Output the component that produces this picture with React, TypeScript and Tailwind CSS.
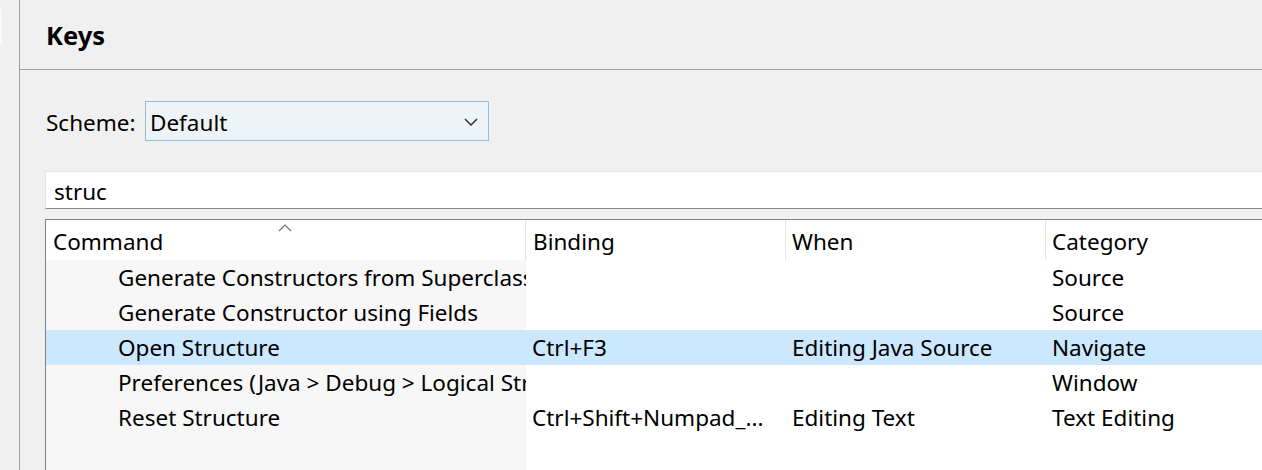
import React from "react";

const font = { fontFamily: '"Noto Sans", "Open Sans", sans-serif' };

const rows = [
  { cmd: "Generate Constructors from Superclass", bind: "", when: "", cat: "Source" },
  { cmd: "Generate Constructor using Fields", bind: "", when: "", cat: "Source" },
  { cmd: "Open Structure", bind: "Ctrl+F3", when: "Editing Java Source", cat: "Navigate", sel: true },
  { cmd: "Preferences (Java > Debug > Logical Structures)", bind: "", when: "", cat: "Window" },
  { cmd: "Reset Structure", bind: "Ctrl+Shift+Numpad_...", when: "Editing Text", cat: "Text Editing" },
];

export default function App() {
  return (
    <div
      className="w-[1262px] h-[470px] bg-[#f0f0f0] flex overflow-hidden text-black text-[22.5px]"
      style={font}
    >
      <div className="w-[19px] shrink-0 flex flex-col">
        <div className="mt-[9px] h-[36px] w-[2px] bg-[#f9f9f9]" />
      </div>
      <div className="flex-1 min-w-0 flex flex-col border-l border-[#a0a0a0] overflow-hidden">
        <div className="h-[70px] shrink-0 border-b border-[#a0a0a0] flex items-start pl-[26px] pt-[23px]">
          <div className="font-bold text-[25.5px] leading-none">Keys</div>
        </div>
        <div className="flex-1 flex flex-col pl-[25px] pt-[31px] min-w-0">
          <div className="flex items-center h-[40px]">
            <div className="w-[100px] pl-[1px] pt-[3px]">Scheme:</div>
            <div className="w-[344px] h-[40px] border border-[#90bfe3] bg-[#eef3f7] flex items-center pl-[4px] pr-[10px] justify-between">
              <span className="pt-[3px]">Default</span>
              <svg width="14" height="8" viewBox="0 0 14 8" className="mt-[2px]">
                <polyline points="1,1 7,7 13,1" fill="none" stroke="#333" strokeWidth="1.5" />
              </svg>
            </div>
          </div>
          <div className="mt-[30px] w-[1240px] h-[38px] shrink-0 bg-white border-t border-l border-[#e3e3e3] border-b-[1.5px] border-b-[#8a8a8a] flex items-center pl-[8px] pt-[3px]">
            struc
          </div>
          <div className="mt-[10px] w-[1240px] flex-1 border-t border-l border-[#828282] bg-white flex flex-col">
            <div className="grid grid-cols-[480px_260px_260px_1fr] h-[40px] shrink-0">
              <div className="relative border-r border-[#e5e5e5] pl-[7px] pt-[5px]">
                Command
                <svg width="14" height="8" viewBox="0 0 14 8" className="absolute left-[232px] top-[4px]">
                  <polyline points="1,7 7,1 13,7" fill="none" stroke="#707070" strokeWidth="1.2" />
                </svg>
              </div>
              <div className="border-r border-[#e5e5e5] pl-[7px] pt-[5px]">Binding</div>
              <div className="border-r border-[#e5e5e5] pl-[6px] pt-[5px]">When</div>
              <div className="pl-[6px] pt-[5px]">Category</div>
            </div>
            {rows.map((r, i) => (
              <div
                key={i}
                className={
                  "grid grid-cols-[480px_260px_260px_1fr] h-[35px] shrink-0 items-center whitespace-nowrap " +
                  (r.sel ? "bg-[#cce8ff]" : "")
                }
              >
                <div className={"h-full flex items-center pl-[72px] pt-[1px] overflow-hidden " + (r.sel ? "" : "bg-[#f7f7f7]")}>
                  <span className="whitespace-nowrap">{r.cmd}</span>
                </div>
                <div className="h-full flex items-center pl-[6px] pt-[1px] overflow-hidden">
                  <span className="whitespace-nowrap">{r.bind}</span>
                </div>
                <div className="h-full flex items-center pl-[6px] pt-[1px] overflow-hidden">{r.when}</div>
                <div className="h-full flex items-center pl-[6px] pt-[1px]">{r.cat}</div>
              </div>
            ))}
            <div className="grid grid-cols-[480px_1fr] flex-1">
              <div className="bg-[#f7f7f7]" />
              <div />
            </div>
          </div>
        </div>
      </div>
    </div>
  );
}
